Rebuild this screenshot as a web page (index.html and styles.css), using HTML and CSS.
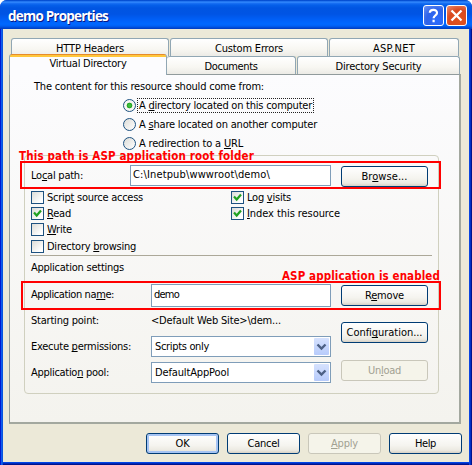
FILE: index.html
```
<!DOCTYPE html>
<html lang="en">
<head>
<meta charset="utf-8">
<title>demo Properties</title>
<link rel="stylesheet" href="styles.css">
</head>
<body>
<div class="window">
  <header class="titlebar">
    <h1><span data-w="100">demo Properties</span></h1>
    <button class="cap help" aria-label="Help"><svg width="21" height="21" viewBox="0 0 21 21"><path d="M6.8 7.8C7 3.9 14.2 4 14 8c-.1 2.4-3.4 2.7-3.4 5.3M10.6 14.8v2.4" fill="none" stroke="#fff" stroke-width="2.2"/></svg></button>
    <button class="cap close" aria-label="Close"><svg width="21" height="21" viewBox="0 0 21 21"><path d="M5.5 5.5l10 10M15.5 5.5l-10 10" fill="none" stroke="#fff" stroke-width="2.3"/></svg></button>
  </header>
  <main>
    <nav class="tabs back">
      <div class="tab"><span data-w="68">HTTP Headers</span></div>
      <div class="tab"><span data-w="68">Custom Errors</span></div>
      <div class="tab"><span data-w="42">ASP.NET</span></div>
    </nav>
    <nav class="tabs front">
      <div class="tab selected"><span data-w="77">Virtual Directory</span></div>
      <div class="tab"><span data-w="53">Documents</span></div>
      <div class="tab"><span data-w="86">Directory Security</span></div>
    </nav>
    <section class="panel">
      <p class="intro"><span data-w="230">The content for this resource should come from:</span></p>
      <div class="radios">
        <label><i class="radio on"></i><span class="focus"><span data-w="173">A <u>d</u>irectory located on this computer</span></span></label>
        <label><i class="radio"></i><span data-w="178">A <u>s</u>hare located on another computer</span></label>
        <label><i class="radio"></i><span data-w="104">A redirection to a <u>U</u>RL</span></label>
      </div>
      <div class="group">
        <div class="row path">
          <span data-w="52">Lo<u>c</u>al path:</span>
          <div class="field"><span data-w="137">C:\Inetpub\wwwroot\demo\</span></div>
          <button class="btn"><span data-w="46">Br<u>o</u>wse...</span></button>
        </div>
        <div class="checks">
          <label><i class="check"></i><span data-w="96">Scrip<u>t</u> source access</span></label>
          <label><i class="check on"><svg width="11" height="11"><path d="M2 4.5l2.7 3L9 2.5" fill="none" stroke="#21a121" stroke-width="2.2"/></svg></i><span data-w="44">Log <u>v</u>isits</span></label>
          <label><i class="check on"><svg width="11" height="11"><path d="M2 4.5l2.7 3L9 2.5" fill="none" stroke="#21a121" stroke-width="2.2"/></svg></i><span data-w="24"><u>R</u>ead</span></label>
          <label><i class="check on"><svg width="11" height="11"><path d="M2 4.5l2.7 3L9 2.5" fill="none" stroke="#21a121" stroke-width="2.2"/></svg></i><span data-w="93"><u>I</u>ndex this resource</span></label>
          <label><i class="check"></i><span data-w="25"><u>W</u>rite</span></label>
          <label class="last"><i class="check"></i><span data-w="89">Directory <u>b</u>rowsing</span></label>
        </div>
        <hr>
        <div class="settings"><span data-w="93">Application settings</span></div>
        <div class="app">
          <div class="fields">
            <span class="r1" data-w="83">Application na<u>m</u>e:</span>
            <div class="field r1"><span data-w="25">demo</span></div>
            <span data-w="68">Starting point:</span>
            <span data-w="130">&lt;Default Web Site&gt;\dem...</span>
            <span data-w="100">Execute <u>p</u>ermissions:</span>
            <div class="field select"><span data-w="54">Scripts only</span><i class="arrow"><svg width="15" height="17"><path d="M3.5 6.5l4 4 4-4" fill="none" stroke="#4d6185" stroke-width="2.4"/></svg></i></div>
            <span data-w="78">Applicatio<u>n</u> pool:</span>
            <div class="field select"><span data-w="74">DefaultAppPool</span><i class="arrow"><svg width="15" height="17"><path d="M3.5 6.5l4 4 4-4" fill="none" stroke="#4d6185" stroke-width="2.4"/></svg></i></div>
          </div>
          <div class="actions">
            <button class="btn"><span data-w="39">R<u>e</u>move</span></button>
            <button class="btn"><span data-w="76">Confi<u>g</u>uration...</span></button>
            <button class="btn disabled"><span data-w="33">Un<u>l</u>oad</span></button>
          </div>
        </div>
      </div>
    </section>
    <footer>
      <button class="btn default"><span data-w="14">OK</span></button>
      <button class="btn"><span data-w="32">Cancel</span></button>
      <button class="btn disabled"><span data-w="27"><u>A</u>pply</span></button>
      <button class="btn"><span data-w="21">Help</span></button>
    </footer>
  </main>
  <div class="mark mark-path"><b><span data-w="235">This path is ASP application root folder</span></b></div>
  <div class="mark mark-app"><b><span data-w="158">ASP application is enabled</span></b></div>
</div>
<script src="fit.js"></script>
</body>
</html>
```
FILE: fit.js
```
// Tracks each label to its intended width.
document.querySelectorAll('[data-w]').forEach(function (el) {
  var range = document.createRange();
  range.selectNodeContents(el);
  var natural = range.getBoundingClientRect().width;
  el.style.letterSpacing = ((el.dataset.w - natural) / el.textContent.length) + 'px';
});
```
FILE: styles.css
```
* { box-sizing: border-box; }
body {
  margin: 0;
  background: #fff;
  font: 11px/14px "DejaVu Sans Condensed", "DejaVu Sans", sans-serif;
  font-stretch: condensed;
  color: #000;
}
span { white-space: nowrap; }
u { text-underline-offset: 1px; text-decoration-thickness: 1px; text-decoration-skip-ink: none; }
i { font-style: normal; flex: none; }
svg { display: block; }
button { font: inherit; color: inherit; margin: 0; padding: 0; }

.window {
  position: relative;
  width: 472px;
  height: 465px;
  padding: 0 3px 3px;
  background: linear-gradient(90deg, #0019cf 0 1px, #0f5cf0 1px 2px, #0855dd 2px 3px, transparent 3px 469px, #0a45e0 469px 470px, #0030c4 470px 471px, #00138c 471px),
    linear-gradient(#0054e3 0 462px, #0044e6 462px 463px, #0029b8 463px 464px, #00138c 464px);
  border-radius: 7px 7px 0 0;
  overflow: hidden;
}
.titlebar {
  display: flex;
  height: 29px;
  margin: 0 -3px;
  padding: 5px 5px 0 8px;
  gap: 2px;
  background: linear-gradient(#0148c7 0, #0a58e0 1px, #3a92ff 2px, #1c72f5 3px, #0560ea 5px, #0055e2 8px, #0054e4 14px, #0060f8 20px, #0068ff 24px, #0060f4 26px, #0046d0 28px, #003bbd 29px);
}
.titlebar h1 {
  flex: 1;
  margin: 1px 0 0;
  font: bold 13.5px/20px "Open Sans", "Noto Sans", sans-serif;
  color: #fff;
  text-shadow: 1px 1px 0 #0a1883;
}
.cap { width: 21px; height: 21px; border: 1px solid #fff; border-radius: 3px; }
.cap svg { margin: -1px; }
.help { background: radial-gradient(circle at 70% 75%, #2a6cff, #2f63e8 55%, #6c93f5); }
.close { background: radial-gradient(circle at 65% 75%, #e2521d, #d94a20 55%, #ec8e72); }

main { height: 433px; padding: 9px 7px 0 6px; background: #ece9d8; }
.tabs { display: flex; position: relative; }
.tab {
  display: flex;
  justify-content: center;
  height: 18px;
  padding-top: 3px;
  border: 1px solid #91a7b4;
  border-bottom: 0;
  border-radius: 3px 3px 0 0;
  background: linear-gradient(#fff, #f8f7f2 60%, #ecebe6);
}
.back { gap: 1px; padding-left: 2px; }
.back .tab { width: 158px; }
.back .tab:nth-child(3) { width: 130px; }
.front .tab:nth-child(2) { width: 129px; border-left: 0; }
.front .tab:nth-child(3) { width: 163px; margin-left: 1px; }
.front .selected {
  width: 158px;
  height: 21px;
  margin: -2px 0 -1px;
  padding-top: 3px;
  border-top: 0;
  background: linear-gradient(#e68b2c 0 1px, #ffc73c 1px 3px, #fcfcfe 3px);
  z-index: 1;
}

.panel {
  width: 452px;
  height: 350px;
  padding: 5px 14px;
  border: 1px solid #919b9c;
  border-right: 2px solid #a3a89f;
  border-bottom: 2px solid #a3a89f;
  background: linear-gradient(#fcfcfe, #f4f3ee);
}
.intro { margin: 0 0 0 10px; height: 15px; }
.radios { padding-left: 99px; height: 60px; display: flex; flex-direction: column; }
.radios label { display: flex; align-items: center; height: 19px; }
.radios label:first-child { height: 20px; }
.radio { width: 13px; height: 13px; border: 1px solid #1d5281; border-radius: 50%; background: linear-gradient(135deg, #dcdcd7, #fff); margin-right: 3px; }
.radio.on { background: radial-gradient(circle, #3fbf3f 0 1px, #21a121 2.5px, #f6f6f3 3.2px); margin-right: 1px; }
.focus { display: block; width: 177px; height: 15px; padding-left: 1px; border: 1px dotted #222; line-height: 13px; }

.group { width: 415px; height: 239px; border: 1px solid #d0d0bf; border-radius: 4px; padding: 9px 6px 0; }
.path { display: grid; grid-template-columns: 99px 201px 87px; height: 26px; align-items: start; }
.path > span { padding-top: 4px; }
.path .btn { margin: 1px 0 0 10px; }
.field { display: flex; height: 21px; padding: 2px 2px 0; border: 1px solid #7f9db9; background: #fff; }
.btn {
  display: flex;
  align-items: center;
  justify-content: center;
  width: 87px;
  height: 21px;
  border: 1px solid #003c74;
  border-radius: 3px;
  background: linear-gradient(#fff, #f5f4ef 60%, #eceae2 85%, #d6d0c5);
}
.disabled { border-color: #c9c7ba; background: #f5f4ea; color: #a1a192; }
.default { box-shadow: inset 0 0 0 2px #a6c4f3, inset 0 -2px 0 #6982ee; }
.checks { display: grid; grid-template-columns: 200px auto; grid-template-rows: 16px 16px 16.5px 16.5px; }
.checks label { display: flex; align-items: flex-start; gap: 3px; }
.checks label:nth-child(6) { grid-column: 1; grid-row: 4; }
.check { width: 13px; height: 13px; border: 1px solid #1d5180; background: linear-gradient(135deg, #dcdcd7, #fff 80%); }
hr { width: 402px; height: 1px; margin: -1px 0 0 -1px; border: 0; background: #aca899; }
.settings { height: 28px; padding-top: 5px; }
.app { display: flex; }
.fields { display: grid; grid-template-columns: 120px 180px; grid-template-rows: 26px 26px 26px 26px; width: 310px; }
.fields > span { padding-top: 4px; }
.fields .field.r1 { height: 23px; padding-top: 3px; }
.select { padding: 3px 1px 0 3px; }
.arrow { width: 15px; height: 17px; margin: -2px 0 0 auto; border-radius: 1px; background: linear-gradient(#d6e2fe, #b7cbfb); }
.actions { display: flex; flex-direction: column; gap: 16px; padding-top: 1px; }
.actions .disabled { margin-top: 1px; }
footer { display: flex; gap: 8px; padding: 9px 0 0 137px; }
footer .btn { width: 73px; }

.mark { position: absolute; border: 2px solid #f00; color: #f00; pointer-events: none; }
.mark b { position: absolute; top: -14px; font: bold 11.5px/14px "DejaVu Sans Condensed", "DejaVu Sans", sans-serif; }
.mark-path { left: 20px; top: 161px; width: 421px; height: 28px; }
.mark-path b { left: -3px; }
.mark-app { left: 21px; top: 281px; width: 420px; height: 29px; }
.mark-app b { right: -1px; }
```
